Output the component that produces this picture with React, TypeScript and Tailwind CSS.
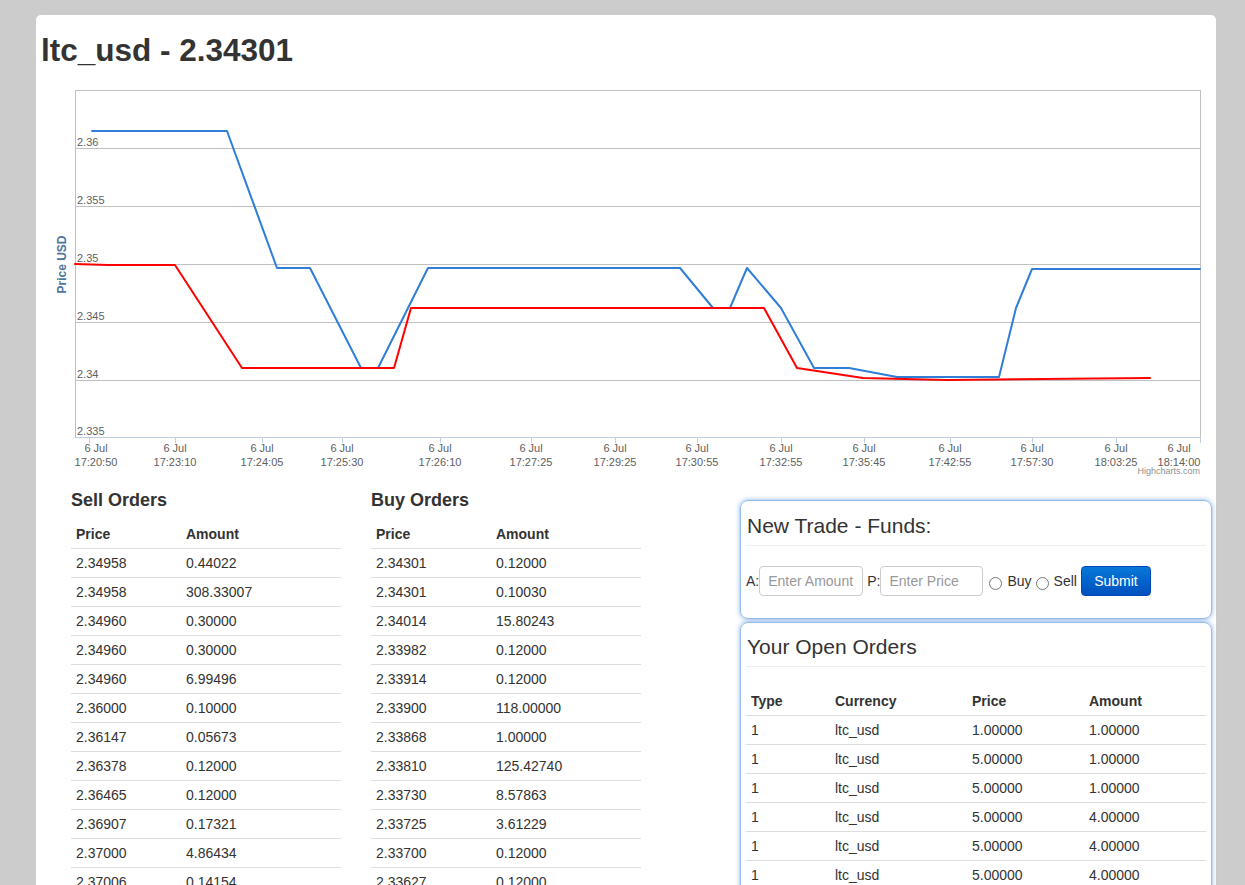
import React from "react";

const sellOrders = [
  ["2.34958", "0.44022"],
  ["2.34958", "308.33007"],
  ["2.34960", "0.30000"],
  ["2.34960", "0.30000"],
  ["2.34960", "6.99496"],
  ["2.36000", "0.10000"],
  ["2.36147", "0.05673"],
  ["2.36378", "0.12000"],
  ["2.36465", "0.12000"],
  ["2.36907", "0.17321"],
  ["2.37000", "4.86434"],
  ["2.37006", "0.14154"],
  ["2.37500", "1.00000"],
];

const buyOrders = [
  ["2.34301", "0.12000"],
  ["2.34301", "0.10030"],
  ["2.34014", "15.80243"],
  ["2.33982", "0.12000"],
  ["2.33914", "0.12000"],
  ["2.33900", "118.00000"],
  ["2.33868", "1.00000"],
  ["2.33810", "125.42740"],
  ["2.33730", "8.57863"],
  ["2.33725", "3.61229"],
  ["2.33700", "0.12000"],
  ["2.33627", "0.12000"],
  ["2.33600", "0.50000"],
];

const openOrders = [
  ["1", "ltc_usd", "1.00000", "1.00000"],
  ["1", "ltc_usd", "5.00000", "1.00000"],
  ["1", "ltc_usd", "5.00000", "1.00000"],
  ["1", "ltc_usd", "5.00000", "4.00000"],
  ["1", "ltc_usd", "5.00000", "4.00000"],
  ["1", "ltc_usd", "5.00000", "4.00000"],
  ["1", "ltc_usd", "5.00000", "4.00000"],
];

// page coordinates, the chart group is shifted back by its own offset
const bluePts = [
  [92, 131], [227, 131], [277, 268], [310, 268], [361, 368], [378, 368],
  [428, 268], [680, 268], [713, 308], [730, 308], [747, 268], [781, 308],
  [814, 368], [849, 368], [897, 377], [999, 377], [1016, 308], [1032, 269],
  [1200, 269],
];

const redPts = [
  [75, 264], [108, 265], [175, 265], [242, 368], [394, 368], [411, 308],
  [764, 308], [797, 368], [863, 378], [947, 380], [1150, 378],
];

const yGrid = [
  { y: 148, label: "2.36" },
  { y: 206, label: "2.355" },
  { y: 264, label: "2.35" },
  { y: 322, label: "2.345" },
  { y: 380, label: "2.34" },
  { y: 437, label: "2.335" },
];

const xTicks = [
  { x: 89, cx: 96, t: "17:20:50" },
  { x: 175, cx: 175, t: "17:23:10" },
  { x: 262, cx: 262, t: "17:24:05" },
  { x: 342, cx: 342, t: "17:25:30" },
  { x: 440, cx: 440, t: "17:26:10" },
  { x: 531, cx: 531, t: "17:27:25" },
  { x: 615, cx: 615, t: "17:29:25" },
  { x: 697, cx: 697, t: "17:30:55" },
  { x: 781, cx: 781, t: "17:32:55" },
  { x: 864, cx: 864, t: "17:35:45" },
  { x: 950, cx: 950, t: "17:42:55" },
  { x: 1032, cx: 1032, t: "17:57:30" },
  { x: 1116, cx: 1116, t: "18:03:25" },
  { x: 1200, cx: 1179, t: "18:14:00" },
];

const toPoints = (pts: number[][]) => pts.map((p) => p.join(",")).join(" ");

const PriceChart = () => (
  <svg width={1180} height={400} className="block" style={{ fontFamily: "'Liberation Sans', Arial, sans-serif" }}>
    <g transform="translate(-36,-80)">
      {/* grid */}
      {yGrid.slice(0, 5).map((g) => (
        <line key={g.y} x1={75} x2={1200} y1={g.y + 0.5} y2={g.y + 0.5} stroke="#C0C0C0" strokeWidth={1} />
      ))}
      <rect x={75.5} y={90.5} width={1125} height={347} fill="none" stroke="#C0C0C0" strokeWidth={1} />
      {/* x axis */}
      <line x1={75} x2={1201} y1={437.5} y2={437.5} stroke="#C0D0E0" strokeWidth={1} />
      {xTicks.map((t) => (
        <line key={t.x} x1={t.x + 0.5} x2={t.x + 0.5} y1={437} y2={443} stroke="#C0D0E0" strokeWidth={1} />
      ))}
      {/* y labels */}
      {yGrid.map((g) => (
        <text key={g.label} x={77} y={g.y - 2} fontSize={11} fill="#606060">
          {g.label}
        </text>
      ))}
      {/* x labels */}
      {xTicks.map((t) => (
        <text key={t.t} x={t.cx} textAnchor="middle" fontSize={11} fill="#606060">
          <tspan x={t.cx} y={452}>6 Jul</tspan>
          <tspan x={t.cx} y={466}>{t.t}</tspan>
        </text>
      ))}
      <text
        transform="translate(66,264.5) rotate(-90)"
        textAnchor="middle"
        fontSize={12}
        fontWeight="bold"
        fill="#4d759e"
      >
        Price USD
      </text>
      {/* series */}
      <polyline points={toPoints(bluePts)} fill="none" stroke="#2f7ed8" strokeWidth={2} strokeLinejoin="round" strokeLinecap="round" />
      <polyline points={toPoints(redPts)} fill="none" stroke="#ff0000" strokeWidth={2} strokeLinejoin="round" strokeLinecap="round" />
      <text x={1200} y={474} textAnchor="end" fontSize={9} fill="#909090">
        Highcharts.com
      </text>
    </g>
  </svg>
);

const cell = "px-[5px] py-[5px] leading-[18px] text-left border-b border-[#dddddd]";

const OrderTable = ({ title, rows, firstCol }: { title: string; rows: string[][]; firstCol: string }) => (
  <div className="w-[270px]">
    <h4 className="text-[18px] font-bold leading-[20px] mb-[10px]">{title}</h4>
    <table className="w-full border-collapse text-[14px]">
      <thead>
        <tr>
          <th className={`${cell} ${firstCol} font-bold`}>Price</th>
          <th className={`${cell} font-bold`}>Amount</th>
        </tr>
      </thead>
      <tbody>
        {rows.map((r, i) => (
          <tr key={i}>
            <td className={cell}>{r[0]}</td>
            <td className={cell}>{r[1]}</td>
          </tr>
        ))}
      </tbody>
    </table>
  </div>
);

const App = () => {
  return (
    <div className="min-h-screen bg-[#cccccc] pt-[15px] font-['Liberation_Sans',Arial,sans-serif] text-[#333333]">
      <div className="ml-[36px] w-[1180px] bg-white rounded-t-[5px] pb-[20px]">
        <h1 className="pl-[5px] pt-[18px] text-[31.5px] font-bold leading-[35px]">ltc_usd - 2.34301</h1>

        <div className="mt-[12px]">
          <PriceChart />
        </div>

        <div className="flex mt-[10px] pl-[35px] pr-[4px]">
          <div className="flex gap-[30px]">
            <OrderTable title="Sell Orders" rows={sellOrders} firstCol="w-[110px]" />
            <OrderTable title="Buy Orders" rows={buyOrders} firstCol="w-[120px]" />
          </div>

          <div className="ml-auto w-[472px] mt-[10px] flex flex-col gap-[3px]">
            {/* New trade */}
            <div className="rounded-[8px] border border-[#94bdea] shadow-[0_0_5px_rgba(82,140,220,0.7)] px-[5px] pt-[13px] pb-[22px]">
              <h3 className="text-[21px] leading-[24px] pl-[1px]">New Trade - Funds:</h3>
              <div className="mt-[7px] border-t border-[#eeeeee]" />
              <div className="mt-[20px] flex items-center h-[30px] text-[14px]">
                <span>A:</span>
                <input
                  className="w-[104px] h-[30px] rounded-[4px] border border-[#cccccc] px-[8px] text-[14px] placeholder:text-[#999999] outline-none"
                  placeholder="Enter Amount"
                />
                <span className="ml-[4px]">P:</span>
                <input
                  className="w-[103px] h-[30px] rounded-[4px] border border-[#cccccc] px-[8px] text-[14px] placeholder:text-[#999999] outline-none"
                  placeholder="Enter Price"
                />
                <input type="radio" name="side" className="ml-[6px] mt-[4px] w-[13px] h-[13px]" />
                <span className="ml-[5px]">Buy</span>
                <input type="radio" name="side" className="ml-[4px] mt-[4px] w-[13px] h-[13px]" />
                <span className="ml-[5px]">Sell</span>
                <button className="ml-[4px] h-[30px] w-[70px] rounded-[4px] border border-[#0048b4] bg-linear-to-b from-[#0a78d8] to-[#0050bf] text-white text-[14px]">
                  Submit
                </button>
              </div>
            </div>

            {/* Open orders */}
            <div className="rounded-[8px] border border-[#94bdea] shadow-[0_0_5px_rgba(82,140,220,0.7)] px-[5px] pt-[12px] pb-[20px]">
              <h3 className="text-[21px] leading-[24px] pl-[1px]">Your Open Orders</h3>
              <div className="mt-[7px] border-t border-[#eeeeee]" />
              <table className="mt-[20px] w-full border-collapse text-[14px]">
                <thead>
                  <tr>
                    <th className={`${cell} w-[84px] font-bold`}>Type</th>
                    <th className={`${cell} w-[137px] font-bold`}>Currency</th>
                    <th className={`${cell} w-[117px] font-bold`}>Price</th>
                    <th className={`${cell} font-bold`}>Amount</th>
                  </tr>
                </thead>
                <tbody>
                  {openOrders.map((r, i) => (
                    <tr key={i}>
                      {r.map((v, j) => (
                        <td key={j} className={cell}>
                          {v}
                        </td>
                      ))}
                    </tr>
                  ))}
                </tbody>
              </table>
            </div>
          </div>
        </div>
      </div>
    </div>
  );
};

export default App;
